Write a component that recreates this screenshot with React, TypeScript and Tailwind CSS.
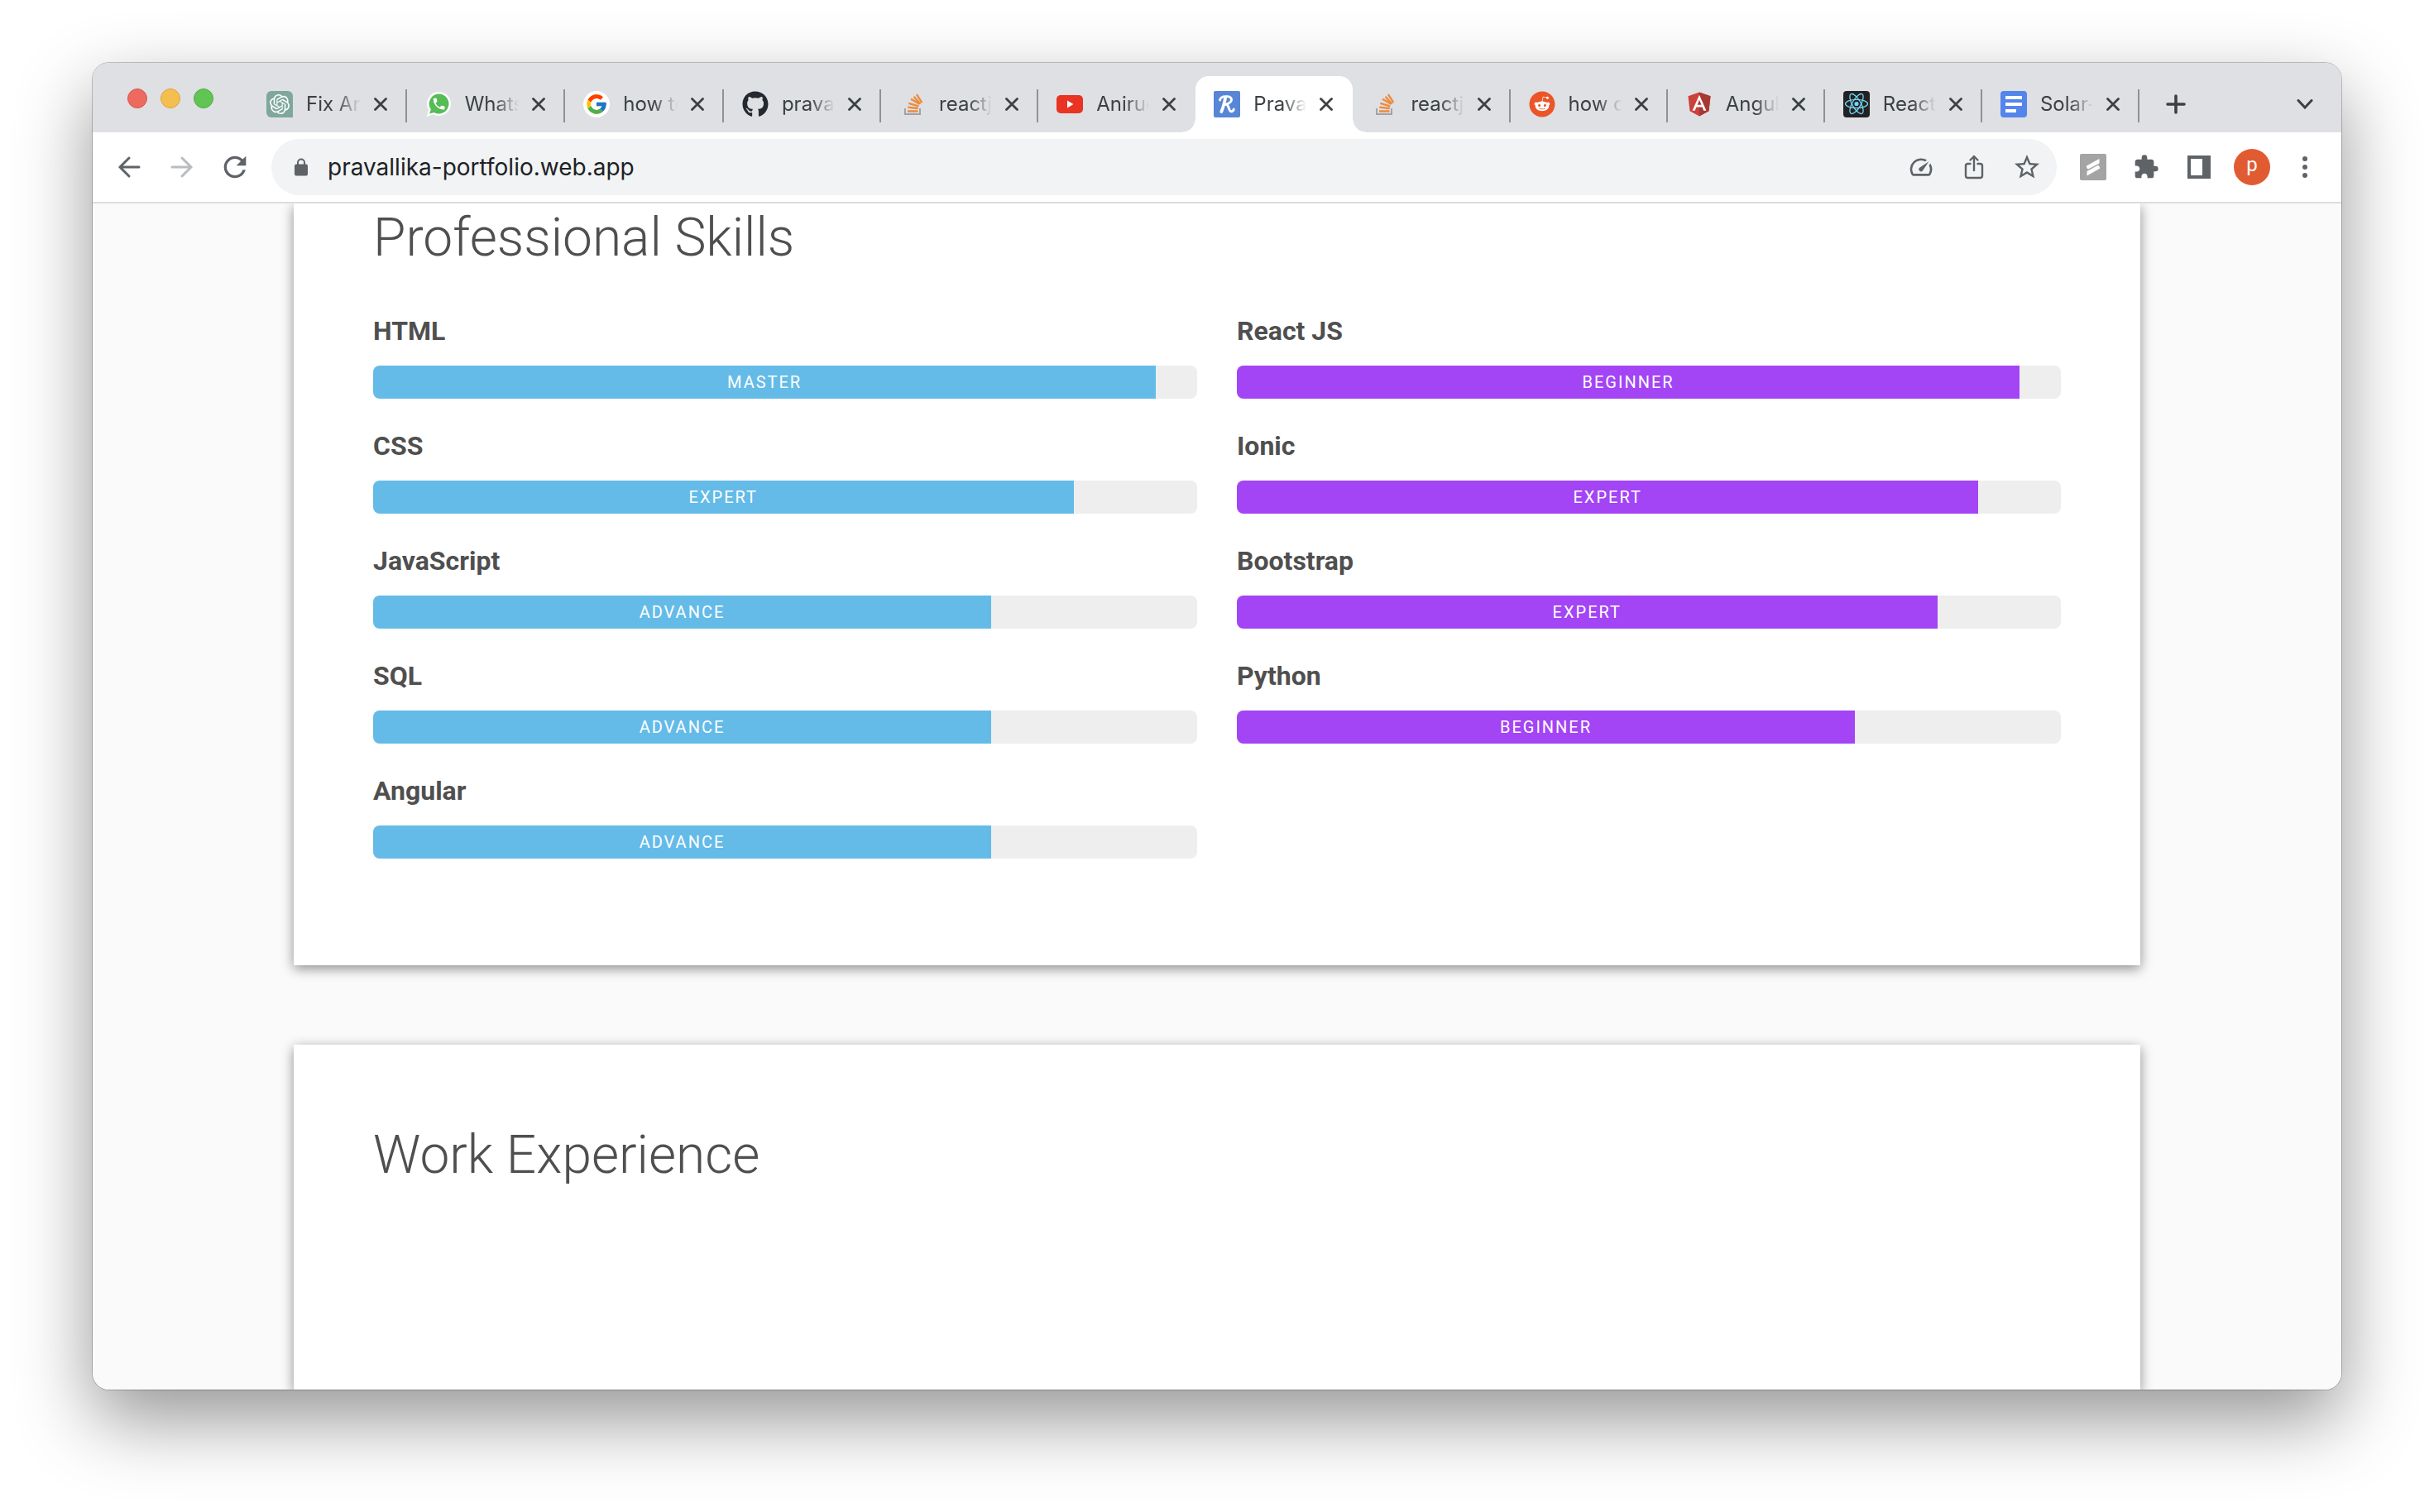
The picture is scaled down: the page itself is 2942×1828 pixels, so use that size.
import React from "react";
import { FcGoogle } from "react-icons/fc";
import { FaGithub, FaReddit } from "react-icons/fa";
import { SiOpenai } from "react-icons/si";
import { MdExtension, MdRefresh, MdStarBorder } from "react-icons/md";

function OpenAiIcon() {
  return (
    <span className="flex size-8 items-center justify-center rounded-md rounded-br-none bg-[#7fa79b] text-white">
      <SiOpenai className="size-6" />
    </span>
  );
}

function WhatsAppIcon() {
  return (
    <svg viewBox="0 0 32 32" className="size-8">
      <path d="M16.500 1a14.500 14.500 0 1 1-6.900 27.300L1.600 31l2.500-8A14.500 14.500 0 0 1 16.500 1z" fill="#fff" />
      <path d="M16.500 3.500a12 12 0 1 1-6 22.400L5.200 27.500l1.600-5.200A12 12 0 0 1 16.500 3.500z" fill="#57bb56" />
      <path
        transform="translate(7.500 6.500) scale(.76)"
        fill="#fff"
        d="M6.620 10.790c1.440 2.830 3.760 5.140 6.590 6.590l2.200-2.200c.27-.27.67-.36 1.020-.24 1.120.37 2.330.57 3.570.57.550 0 1 .45 1 1V20c0 .550-.450 1-1 1-9.390 0-17-7.610-17-17 0-.550.450-1 1-1h3.500c.550 0 1 .450 1 1 0 1.250.200 2.450.570 3.570.110.350.030.740-.250 1.020l-2.200 2.200z"
      />
    </svg>
  );
}

function GoogleIcon() {
  return (
    <span className="flex size-8 items-center justify-center rounded-full bg-white">
      <FcGoogle className="size-7" />
    </span>
  );
}

function GithubIcon() {
  return <FaGithub className="size-8 text-[#24292f]" />;
}

function StackOverflowIcon() {
  return (
    <svg viewBox="0 0 32 32" className="size-8" fill="none" strokeWidth="2">
      <path d="M7 21v7h18v-7" stroke="#9fa3a9" />
      <g stroke="#ec8b3c" strokeWidth="2.400">
        <path d="M10 24.500h12.500M10.300 19.600l12.400 1.400M11.300 14.800l12 3.500M14 9.800l10.500 6M17.600 6.800l7.800 9M21 4.200l6.300 10" />
      </g>
    </svg>
  );
}

function YouTubeIcon() {
  return (
    <svg viewBox="0 0 32 32" className="size-8">
      <rect x="0" y="5" width="32" height="22" rx="5" fill="#e93323" />
      <path d="M13 11.500v9l7.500-4.500z" fill="#fff" />
    </svg>
  );
}

function PortfolioIcon() {
  return (
    <svg viewBox="0 0 32 32" className="size-8">
      <rect width="32" height="32" rx="2" fill="#5886d6" />
      <g fill="none" stroke="#fff" strokeLinecap="round" strokeLinejoin="round">
        <path d="M7.500 11C8 7.500 12 6.300 16.500 6.600c5 .4 6.500 3.900 3.500 6.900-1.500 1.500-4 2.500-6 2.800" strokeWidth="2.800" />
        <path d="M14 9C13 14 11.500 20 9.300 25" strokeWidth="3.800" />
        <path d="M15.500 16.300c3 .7 2.500 8 5.500 8.500 1.800.2 2.800-1.200 3.300-2.700" strokeWidth="3" />
      </g>
    </svg>
  );
}

function RedditIcon() {
  return (
    <span className="flex size-8 items-center justify-center rounded-full bg-[radial-gradient(circle,white_60%,transparent_62%)]">
      <FaReddit className="size-8 text-[#eb5528]" />
    </span>
  );
}

function AngularIcon() {
  return (
    <svg viewBox="18 20 214 220" className="size-8">
      <path d="M125 30 31.900 63.200l14.200 123.100L125 230l78.900-43.700 14.200-123.100z" fill="#cb413b" />
      <path d="M125 30v200l78.900-43.700 14.200-123.100z" fill="#a73833" />
      <path
        d="M125 52.100 66.800 182.600h21.700l11.700-29.200h49.400l11.700 29.200H183zm17 83.300h-34l17-40.900z"
        fill="#fff"
      />
    </svg>
  );
}

function ReactIcon() {
  return (
    <svg viewBox="0 0 32 32" className="size-8">
      <rect width="32" height="32" rx="4" fill="#222" />
      <g transform="translate(16 15.500)" fill="none" stroke="#74d4f4" strokeWidth="1.300">
        <circle r="2.600" fill="#74d4f4" stroke="none" />
        <ellipse rx="13.500" ry="5.100" />
        <ellipse rx="13.500" ry="5.100" transform="rotate(60)" />
        <ellipse rx="13.500" ry="5.100" transform="rotate(120)" />
      </g>
    </svg>
  );
}

function DocsIcon() {
  return (
    <svg viewBox="0 0 32 32" className="size-8">
      <rect width="32" height="32" rx="4" fill="#5485ed" />
      <path d="M6 6h20v4H6zM6 14h20v4H6zM6 22h13v4H6z" fill="#fff" />
    </svg>
  );
}

type TabInfo = {
  title: string;
  icon: () => React.JSX.Element;
  active?: boolean;
  wide?: boolean;
  divider: boolean;
};

const tabs: TabInfo[] = [
  { title: "Fix Array", icon: OpenAiIcon, wide: true, divider: true },
  { title: "WhatsApp", icon: WhatsAppIcon, wide: true, divider: true },
  { title: "how to", icon: GoogleIcon, wide: true, divider: true },
  { title: "pravallika", icon: GithubIcon, divider: true },
  { title: "reactjs", icon: StackOverflowIcon, divider: true },
  { title: "Anirudh", icon: YouTubeIcon, divider: false },
  { title: "Pravallika", icon: PortfolioIcon, active: true, divider: false },
  { title: "reactjs", icon: StackOverflowIcon, divider: true },
  { title: "how can", icon: RedditIcon, divider: true },
  { title: "Angular", icon: AngularIcon, divider: true },
  { title: "React", icon: ReactIcon, divider: true },
  { title: "Solar-", icon: DocsIcon, divider: true },
];

function Tab({ title, icon: Icon, active, wide, divider }: TabInfo) {
  return (
    <div
      role="tab"
      aria-selected={!!active}
      className={`relative flex h-17 min-w-0 items-center pr-6 pl-[22px] ${
        wide ? "flex-[96_1_0%]" : "flex-[95_1_0%]"
      } ${active ? "rounded-t-2xl bg-white" : ""}`}
    >
      {active && (
        <>
          <span className="absolute bottom-0 -left-4 size-4 bg-[radial-gradient(circle_at_0_0,transparent_15px,white_16px)]" />
          <span className="absolute -right-4 bottom-0 size-4 bg-[radial-gradient(circle_at_100%_0,transparent_15px,white_16px)]" />
        </>
      )}
      <span className="shrink-0">
        <Icon />
      </span>
      <span className="ml-4 min-w-0 flex-1 overflow-hidden font-['Inter'] text-[24px] leading-8 whitespace-nowrap text-[#3c4043] [mask-image:linear-gradient(to_right,black_55%,transparent)]">
        {title}
      </span>
      <button type="button" aria-label={`Close ${title}`} className="ml-4 shrink-0 text-[#3c4043]">
        <svg viewBox="0 0 16 16" className="size-4" stroke="currentColor" strokeWidth="2.800" strokeLinecap="round">
          <path d="M1.500 1.500l13 13M14.500 1.500l-13 13" />
        </svg>
      </button>
      {divider && <span className="absolute top-4 right-0 h-10 w-0.5 bg-[#8f9195]" />}
    </div>
  );
}

function TabStrip() {
  return (
    <div className="flex h-21 items-end bg-[#dfe0e4]">
      <div className="flex h-17 items-center gap-4 px-[42px] pb-3.5">
        <button type="button" aria-label="Close window" className="size-6 rounded-full border border-[#d9574c] bg-[#ec6a5e]" />
        <button type="button" aria-label="Minimize window" className="size-6 rounded-full border border-[#dba53c] bg-[#f4bf4f]" />
        <button type="button" aria-label="Zoom window" className="size-6 rounded-full border border-[#4fac3f] bg-[#61c554]" />
      </div>
      <div role="tablist" className="flex min-w-0 flex-1">
        {tabs.map((tab, i) => (
          <Tab key={i} {...tab} />
        ))}
      </div>
      <div className="flex h-17 w-61 items-center justify-between px-7 text-[#3c4043]">
        <button type="button" aria-label="New tab" className="flex size-8 items-center justify-center">
          <svg viewBox="0 0 24 24" className="size-6" stroke="currentColor" strokeWidth="3.600" strokeLinecap="round">
            <path d="M12 2v20M2 12h20" />
          </svg>
        </button>
        <button type="button" aria-label="Search tabs" className="flex size-8 items-center justify-center">
          <svg viewBox="0 0 20 12" className="h-3 w-5" fill="none" stroke="currentColor" strokeWidth="3" strokeLinecap="round">
            <path d="M2 1.500l8 8.500 8-8.500" />
          </svg>
        </button>
      </div>
    </div>
  );
}

function IconButton({ label, children }: { label: string; children: React.ReactNode }) {
  return (
    <button type="button" aria-label={label} className="flex size-10 shrink-0 items-center justify-center">
      {children}
    </button>
  );
}

function Toolbar() {
  return (
    <div className="flex h-[86px] items-center gap-6 border-b-2 border-[#dcdddf] bg-white px-6 text-[#5f6368]">
      <IconButton label="Back">
        <svg viewBox="0 0 28 28" className="size-7" fill="none" stroke="currentColor" strokeWidth="3" strokeLinecap="round">
          <path d="M26 14H3M14 3L3 14l11 11" />
        </svg>
      </IconButton>
      <IconButton label="Forward">
        <svg viewBox="0 0 28 28" className="size-7 text-[#babcbe]" fill="none" stroke="currentColor" strokeWidth="3" strokeLinecap="round">
          <path d="M2 14h23M14 3l11 11-11 11" />
        </svg>
      </IconButton>
      <IconButton label="Reload">
        <MdRefresh className="size-10" />
      </IconButton>
      <div className="flex h-17 min-w-0 flex-1 items-center gap-6 rounded-full bg-[#f1f3f4] pr-4 pl-7">
        <svg viewBox="0 0 16 22" className="h-[22px] w-4 shrink-0">
          <rect x="0" y="7.500" width="16" height="14" rx="2" fill="currentColor" />
          <path d="M4 8V5.500a4 4 0 0 1 8 0V8" fill="none" stroke="currentColor" strokeWidth="2" />
        </svg>
        <input
          aria-label="Address"
          defaultValue="pravallika-portfolio.web.app"
          className="min-w-0 flex-1 bg-transparent font-['Inter'] text-[28px] leading-9 text-[#202124] outline-none"
        />
        <IconButton label="Performance">
          <svg viewBox="0 0 24 24" className="size-8" fill="currentColor">
            <path d="M20.380 8.570l-1.230 1.850a8 8 0 0 1-.220 7.580H5.070A8 8 0 0 1 15.580 6.850l1.850-1.230A10 10 0 0 0 3.350 19a2 2 0 0 0 1.720 1h13.850a2 2 0 0 0 1.740-1 10 10 0 0 0-.270-10.440z" />
            <path d="M10.590 15.410a2 2 0 0 0 2.830 0l5.660-8.490-8.490 5.660a2 2 0 0 0 0 2.830z" />
          </svg>
        </IconButton>
        <IconButton label="Share">
          <svg viewBox="0 0 24 30" className="h-[30px] w-6" fill="none" stroke="currentColor" strokeWidth="2.400" strokeLinecap="round" strokeLinejoin="round">
            <path d="M7.500 11H4.500a2.500 2.500 0 0 0-2.500 2.500v12A2.500 2.500 0 0 0 4.500 28h15a2.500 2.500 0 0 0 2.500-2.500v-12a2.500 2.500 0 0 0-2.500-2.500h-3M12 19V2M7.500 6.500L12 2l4.500 4.500" />
          </svg>
        </IconButton>
        <IconButton label="Bookmark this page">
          <MdStarBorder className="size-9" />
        </IconButton>
      </div>
      <IconButton label="Extension">
        <svg viewBox="0 0 32 32" className="size-8">
          <rect width="32" height="32" rx="2" fill="#a4a4a4" />
          <path
            d="M23.500 6v5.500L10 18.500c-1.600-.7-2-2.200-2-4zM8.500 26.500V21L22 13.800c1.600.700 2 2.200 2 4z"
            fill="#fff"
          />
        </svg>
      </IconButton>
      <IconButton label="Extensions">
        <MdExtension className="size-8" />
      </IconButton>
      <IconButton label="Side panel">
        <svg viewBox="0 0 28 28" className="size-7">
          <path d="M0 0h28v28H0zM4 4v20h14V4z" fill="currentColor" fillRule="evenodd" />
        </svg>
      </IconButton>
      <IconButton label="Profile">
        <span className="flex size-11 shrink-0 items-center justify-center rounded-full bg-[#e15b32] pb-1.5 font-['Roboto'] text-[24px] leading-none text-white">
          p
        </span>
      </IconButton>
      <IconButton label="More">
        <svg viewBox="0 0 8 28" className="h-7 w-2" fill="currentColor">
          <circle cx="4" cy="4" r="3" />
          <circle cx="4" cy="14" r="3" />
          <circle cx="4" cy="24" r="3" />
        </svg>
      </IconButton>
    </div>
  );
}

type Skill = { name: string; level: string; percent: number };

const coreSkills: Skill[] = [
  { name: "HTML", level: "MASTER", percent: 95 },
  { name: "CSS", level: "EXPERT", percent: 85 },
  { name: "JavaScript", level: "ADVANCE", percent: 75 },
  { name: "SQL", level: "ADVANCE", percent: 75 },
  { name: "Angular", level: "ADVANCE", percent: 75 },
];

const frameworkSkills: Skill[] = [
  { name: "React JS", level: "BEGINNER", percent: 95 },
  { name: "Ionic", level: "EXPERT", percent: 90 },
  { name: "Bootstrap", level: "EXPERT", percent: 85 },
  { name: "Python", level: "BEGINNER", percent: 75 },
];

function SkillList({ skills, fill }: { skills: Skill[]; fill: string }) {
  return (
    <ul className="flex flex-col gap-[38px]">
      {skills.map((skill) => (
        <li key={skill.name}>
          <h3 className="text-[32px] leading-[38px] font-bold">{skill.name}</h3>
          <div className="mt-[23px] h-10 overflow-hidden rounded-lg bg-[#eee]">
            <div
              className={`flex h-full items-center justify-center text-[20px] leading-6 tracking-widest text-white ${fill}`}
              style={{ width: `${skill.percent}%` }}
            >
              {skill.level}
            </div>
          </div>
        </li>
      ))}
    </ul>
  );
}

function Card({ className, children }: { className: string; children: React.ReactNode }) {
  return (
    <section className={`mx-auto w-full max-w-[2232px] bg-white px-24 shadow-[0_4px_14px_rgba(0,0,0,0.44)] ${className}`}>
      {children}
    </section>
  );
}

export default function App() {
  return (
    <div className="flex h-screen flex-col overflow-hidden bg-white px-28 pt-19 pb-37">
      <div className="flex min-h-0 flex-1 flex-col overflow-hidden rounded-[20px] shadow-[0_0_0_1px_rgba(0,0,0,0.22),0_36px_90px_rgba(0,0,0,0.42)]">
        <TabStrip />
        <Toolbar />
        <main className="flex min-h-0 flex-1 flex-col gap-24 overflow-hidden bg-[#fafafa] font-['Roboto'] text-[#4f4f4f]">
          <Card className="shrink-0 pt-1 pb-[129px]">
            <h2 className="text-[64px] leading-[75px] font-light">Professional Skills</h2>
            <div className="mt-14 grid grid-cols-2 gap-12">
              <SkillList skills={coreSkills} fill="bg-[#64bbe8]" />
              <SkillList skills={frameworkSkills} fill="bg-[#a344f5]" />
            </div>
          </Card>
          <Card className="flex-1 pt-24">
            <h2 className="text-[64px] leading-[75px] font-light">Work Experience</h2>
          </Card>
        </main>
      </div>
    </div>
  );
}
